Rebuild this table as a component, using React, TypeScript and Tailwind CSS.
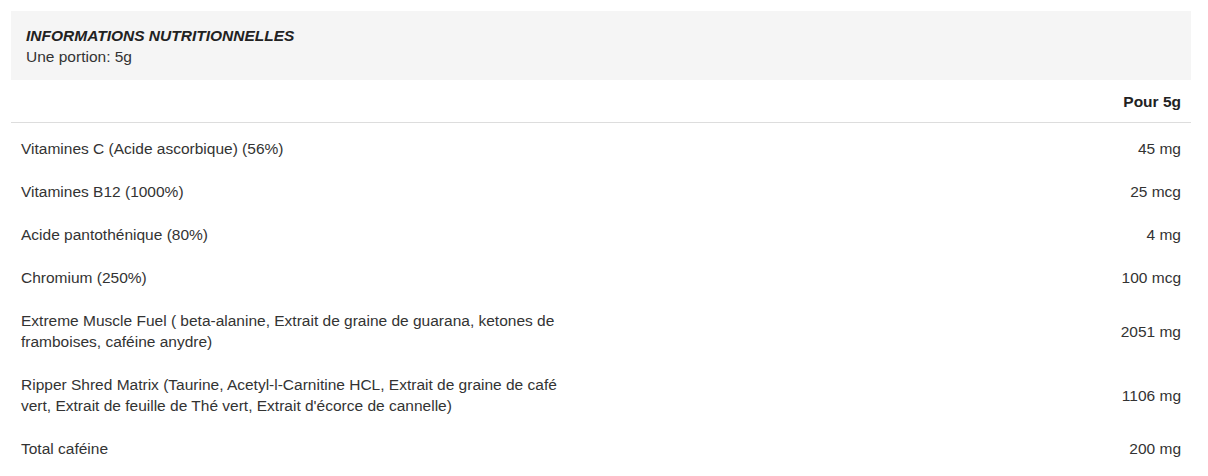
export default function App() {
  const rows: [string, string][] = [
    ["Vitamines C (Acide ascorbique) (56%)", "45 mg"],
    ["Vitamines B12 (1000%)", "25 mcg"],
    ["Acide pantothénique (80%)", "4 mg"],
    ["Chromium (250%)", "100 mcg"],
    ["Extreme Muscle Fuel ( beta-alanine, Extrait de graine de guarana, ketones de framboises, caféine anydre)", "2051 mg"],
    ["Ripper Shred Matrix (Taurine, Acetyl-l-Carnitine HCL, Extrait de graine de café vert, Extrait de feuille de Thé vert, Extrait d'écorce de cannelle)", "1106 mg"],
    ["Total caféine", "200 mg"],
  ];
  return (
    <div className="w-[1208px] h-[476px] bg-white pl-[11px] pr-[17px] pt-[11px] text-[15.5px] leading-[21px] text-[#333] overflow-hidden" style={{ fontFamily: '"Liberation Sans", Arial, sans-serif' }}>
      <div className="bg-[#f5f5f5] h-[69px] px-[15px] pt-[14px]">
        <div className="font-bold italic uppercase text-[#222]">Informations nutritionnelles</div>
        <div>Une portion: 5g</div>
      </div>
      <div className="h-[43px] flex items-center justify-end pr-[10px] border-b border-[#ddd] font-bold text-[#222]">Pour 5g</div>
      <div className="pt-[4px]">
        {rows.map(([l, r]) => (
          <div key={l} className="flex items-center justify-between px-[10px] py-[11px]">
            <div className="w-[550px]">{l}</div>
            <div className="text-right">{r}</div>
          </div>
        ))}
      </div>
    </div>
  );
}
